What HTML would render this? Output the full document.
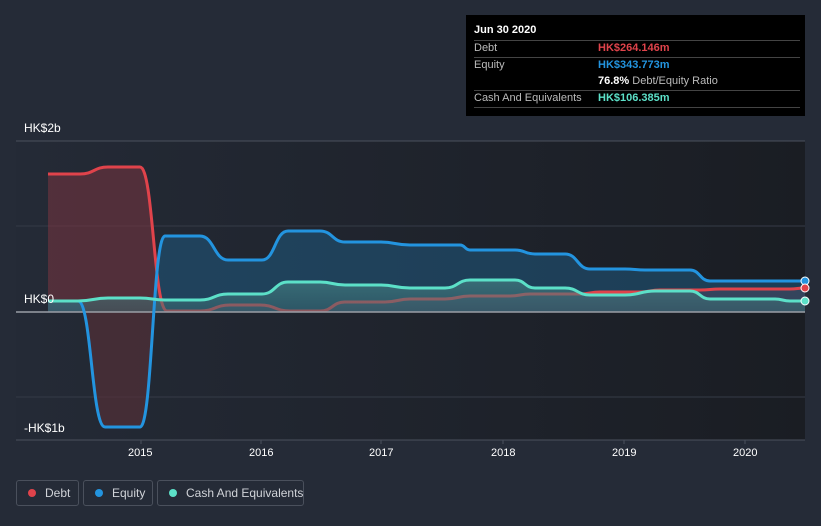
<!DOCTYPE html>
<html><head><meta charset="utf-8"><style>
body{margin:0;width:821px;height:526px;background:#252b37;font-family:"Liberation Sans",sans-serif;overflow:hidden;position:relative}
.lab{position:absolute;color:#fff;font-size:12px}
.yr{position:absolute;color:#fff;font-size:11px;top:447px}
.tt{position:absolute;left:466px;top:15px;width:339px;height:101px;background:#000;color:#fff;font-size:11px}
.tt .r{position:absolute;left:8px;right:5px;border-top:1px solid #444}
.tt span{position:absolute;white-space:nowrap}
.leg{position:absolute;top:480px;height:26px;border:1px solid #4a505c;border-radius:3px;color:#d0d3d8;font-size:12px;box-sizing:border-box;line-height:24px;white-space:nowrap}
.leg i{position:absolute;left:11px;top:8px;width:8px;height:8px;border-radius:50%}
</style></head><body>
<svg width="821" height="526" style="position:absolute;left:0;top:0">
<defs><linearGradient id="bg" x1="0" x2="1"><stop offset="0" stop-color="#242a36"/><stop offset="1" stop-color="#1a1d23"/></linearGradient>
<linearGradient id="cg" x1="0" y1="0" x2="0" y2="1"><stop offset="0" stop-color="#4a8a8a" stop-opacity=".6"/><stop offset="1" stop-color="#3a6a70" stop-opacity=".5"/></linearGradient>
<clipPath id="top"><rect x="0" y="0" width="821" height="312"/></clipPath>
<clipPath id="bot"><rect x="0" y="312" width="821" height="200"/></clipPath></defs>
<rect x="16" y="141" width="789" height="299" fill="url(#bg)"/>
<line x1="16" y1="141" x2="805" y2="141" stroke="#4a505c"/>
<line x1="16" y1="226" x2="805" y2="226" stroke="#353b47"/>
<line x1="16" y1="397" x2="805" y2="397" stroke="#353b47"/>
<line x1="16" y1="440" x2="805" y2="440" stroke="#4a505c"/>
<g id="g"></g>
<line x1="16" y1="312" x2="805" y2="312" stroke="#9a9ea6" stroke-width="1.5"/>
<g id="g2"></g>
<g stroke="#4a505c"><line x1="141" y1="440" x2="141" y2="444"/><line x1="261" y1="440" x2="261" y2="444"/><line x1="381" y1="440" x2="381" y2="444"/><line x1="503" y1="440" x2="503" y2="444"/><line x1="624" y1="440" x2="624" y2="444"/><line x1="745" y1="440" x2="745" y2="444"/></g>
</svg>
<script>
function P(a){var d="M"+a[0][0]+","+a[0][1];for(var i=1;i<a.length;i++){var p=a[i-1],q=a[i],m=(p[0]+q[0])/2;d+=" C"+m+","+p[1]+" "+m+","+q[1]+" "+q[0]+","+q[1];}return d;}
var debt=[[48,174],[80,174],[108,167],[140,167],[167,311],[200,311],[230,305],[260,305],[290,311],[320,311],[345,302],[385,302],[410,299],[445,299],[470,296],[510,296],[530,294],[580,294],[600,292],[640,292],[660,290],[700,290],[720,289],[790,289],[805,288]];
var eq=[[48,301],[78,301],[105,427],[140,427],[165,236],[200,236],[228,260],[262,260],[288,231],[320,231],[345,242],[380,242],[410,245],[460,245],[470,250],[515,250],[535,254],[565,254],[590,269],[625,269],[645,270],[690,270],[710,281],[805,281]];
var cash=[[48,301],[78,301],[108,298],[140,298],[165,300],[200,300],[228,294],[262,294],[288,282],[320,282],[345,285],[380,285],[410,288],[445,288],[470,280],[515,280],[535,288],[565,288],[590,295],[625,295],[655,291],[690,291],[710,299],[775,299],[790,301],[805,301]];
function area(a){return P(a)+" L805,312 L48,312 Z";}
var ns="http://www.w3.org/2000/svg",g=document.getElementById("g"),g2=document.getElementById("g2");
function add(par,d,f,s,o,clip){var e=document.createElementNS(ns,"path");e.setAttribute("d",d);e.setAttribute("fill",f);if(s){e.setAttribute("stroke",s);e.setAttribute("stroke-width","3");}if(o)e.setAttribute("opacity",o);if(clip)e.setAttribute("clip-path","url(#"+clip+")");par.appendChild(e);}
add(g,area(debt),"#7a3540",null,".55");
add(g,area(eq),"#1f5a80",null,".55","top");
add(g,area(eq),"#5a3038",null,".6","bot");
add(g,P(debt),"none","#e0434b");
add(g,area(cash),"url(#cg)");
add(g2,P(eq),"none","#2394df");
add(g2,P(cash),"none","#5ce0c8");
[[281,"#2394df"],[288,"#e0434b"],[301,"#5ce0c8"]].forEach(function(c){var e=document.createElementNS(ns,"circle");e.setAttribute("cx",805);e.setAttribute("cy",c[0]);e.setAttribute("r",4);e.setAttribute("fill",c[1]);e.setAttribute("stroke","#fff");g2.appendChild(e);});
</script>
<div class="lab" style="left:24px;top:121px">HK$2b</div>
<div class="lab" style="left:24px;top:292px">HK$0</div>
<div class="lab" style="left:24px;top:421px">-HK$1b</div>
<div class="yr" style="left:128px">2015</div><div class="yr" style="left:249px">2016</div><div class="yr" style="left:369px">2017</div><div class="yr" style="left:491px">2018</div><div class="yr" style="left:612px">2019</div><div class="yr" style="left:733px">2020</div>
<div class="tt">
<span style="left:8px;top:9px;font-weight:bold">Jun 30 2020</span>
<div class="r" style="top:25px"></div>
<span style="left:8px;top:27px;color:#bbb">Debt</span><span style="left:132px;top:27px;color:#e0434b;font-weight:bold">HK$264.146m</span>
<div class="r" style="top:42px"></div>
<span style="left:8px;top:44px;color:#bbb">Equity</span><span style="left:132px;top:44px;color:#2394df;font-weight:bold">HK$343.773m</span>
<span style="left:132px;top:60px"><b>76.8%</b> <span style="position:static;color:#bbb">Debt/Equity Ratio</span></span>
<div class="r" style="top:75px"></div>
<span style="left:8px;top:77px;color:#bbb">Cash And Equivalents</span><span style="left:132px;top:77px;color:#5ce0c8;font-weight:bold">HK$106.385m</span>
<div class="r" style="top:92px"></div>
</div>
<div class="leg" style="left:16px;width:63px"><i style="background:#e0434b"></i><span style="position:absolute;left:28px">Debt</span></div>
<div class="leg" style="left:83px;width:70px"><i style="background:#2394df"></i><span style="position:absolute;left:28px">Equity</span></div>
<div class="leg" style="left:157px;width:147px"><i style="background:#5ce0c8"></i><span style="position:absolute;left:28px">Cash And Equivalents</span></div>
</body></html>
